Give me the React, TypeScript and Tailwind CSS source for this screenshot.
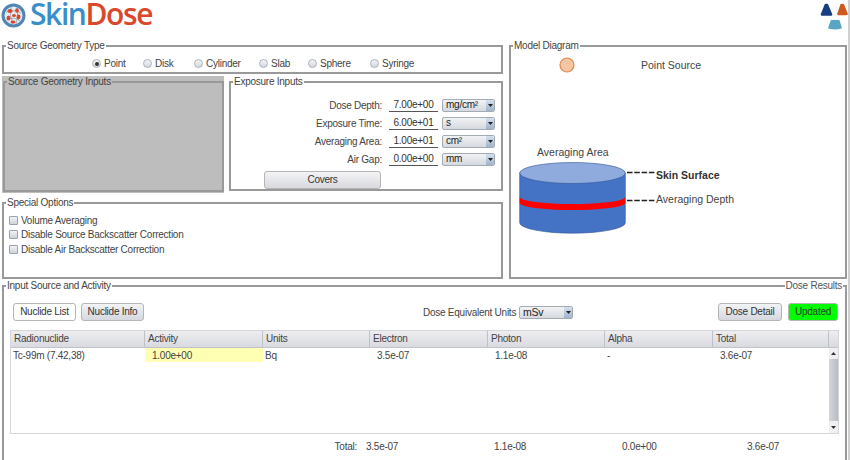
import React from "react";

function Fieldset({ title, className = "", children }: { title: string; className?: string; children?: React.ReactNode }) {
  return (
    <fieldset className={`border-2 border-[#999] min-w-0 ${className}`}>
      <legend className="ml-[2px] px-[1px] leading-[12px] text-[10px] tracking-[-0.25px] text-[#444]">{title}</legend>
      {children}
    </fieldset>
  );
}

function Radio({ label, checked, className = "" }: { label: string; checked?: boolean; className?: string }) {
  return (
    <span className={`flex items-center gap-[3px] ${className}`}>
      <span className="w-[9px] h-[9px] rounded-full border border-[#adb3bb] bg-gradient-to-b from-[#f4f5f7] to-[#d3d7de] flex items-center justify-center">
        {checked && <span className="w-[4px] h-[4px] rounded-full bg-[#333]" />}
      </span>
      <span>{label}</span>
    </span>
  );
}

function Check({ label }: { label: string }) {
  return (
    <div className="flex items-center gap-[3px] h-[14.5px]">
      <span className="w-[9px] h-[9px] rounded-[1px] border border-[#9aa3ad] bg-gradient-to-b from-[#f2f3f5] to-[#cfd3da]" />
      <span>{label}</span>
    </div>
  );
}

function Select({ value, className = "" }: { value: string; className?: string }) {
  return (
    <span className={`h-[13px] flex items-center justify-between rounded-[2px] border border-[#a3abb5] bg-gradient-to-b from-[#f2f3f5] to-[#d5d8de] text-[#222] ${className}`}>
      <span className="pl-[3px] leading-none">{value}</span>
      <span className="w-[8px] h-full rounded-r-[2px] bg-gradient-to-b from-[#d5e0ee] to-[#9fb3cb] flex items-center justify-center">
        <svg width="5" height="3" viewBox="0 0 5 3"><path d="M0 0h5L2.5 3z" fill="#222" /></svg>
      </span>
    </span>
  );
}

function Exposure({ label, value, unit }: { label: string; value: string; unit: string }) {
  return (
    <div className="flex items-center h-[18px]">
      <span className="w-[151px] text-right text-[#444]">{label}</span>
      <span className="w-[49px] ml-[7px] h-[13px] border-b border-[#555] text-center leading-[12px] text-[#333]">{value}</span>
      <Select value={unit} className="ml-[4px] w-[53px]" />
    </div>
  );
}

function Btn({ children, className = "" }: { children: React.ReactNode; className?: string }) {
  return (
    <button className={`h-[18px] rounded-[3px] border border-[#b5b5b5] text-[#333] leading-none flex items-center justify-center whitespace-nowrap ${className}`}>
      {children}
    </button>
  );
}

const columns: [string, string][] = [
  ["Radionuclide", "w-[134px]"],
  ["Activity", "w-[118px]"],
  ["Units", "w-[107px]"],
  ["Electron", "w-[118px]"],
  ["Photon", "w-[117px]"],
  ["Alpha", "w-[108px]"],
  ["Total", "w-[116px]"],
];

function Logo() {
  return (
    <div className="flex items-start h-[28px] pl-[1px]">
      <svg width="25" height="25" viewBox="0 0 25 25" className="mt-[3px]">
        <circle cx="12.5" cy="12.5" r="10.5" fill="#e6ebf0" stroke="#4f86b3" strokeWidth="3" />
        <path d="M5 9 Q12 6 20 10 M6 17 Q13 13 19 18 M10 4 Q8 13 12 21 M16 4 Q18 12 15 21" fill="none" stroke="#8aa0b8" strokeWidth="0.8" />
        <ellipse cx="9" cy="8" rx="2.6" ry="2" fill="#d9482b" />
        <ellipse cx="16" cy="7.5" rx="1.8" ry="2.2" fill="#d9482b" />
        <ellipse cx="7.5" cy="15" rx="2" ry="2.5" fill="#d9482b" />
        <ellipse cx="13" cy="12.5" rx="2" ry="1.6" fill="#d9482b" />
        <ellipse cx="17.5" cy="14" rx="2" ry="2.4" fill="#d9482b" />
        <ellipse cx="12" cy="19" rx="2.6" ry="1.6" fill="#d9482b" />
      </svg>
      <span className="ml-[4px] text-[30px] leading-[28px] tracking-[-1.4px] font-semibold font-['Open_Sans',sans-serif]">
        <span className="text-[#3a8fcb]">Skin</span>
        <span className="text-[#d9482b]">Dose</span>
      </span>
    </div>
  );
}

function CornerLogo() {
  return (
    <svg width="28" height="32" viewBox="0 0 28 32" className="block">
      <polygon points="5.8,5 7,5 11,14.5 2,14.5" fill="#173f80" stroke="#173f80" strokeWidth="2.6" strokeLinejoin="round" />
      <polygon points="21.5,5 23,5 26.6,14 18.4,14" fill="#cc5a1f" stroke="#cc5a1f" strokeWidth="2.4" strokeLinejoin="round" />
      <path d="M10.5 21 Q10.5 20 11.5 20 H18.5 Q19.5 20 19.8 21 L21.8 27.5 Q22 28.5 21 28.8 Q15 30.2 9 28.8 Q8 28.5 8.2 27.5 Z" fill="#5ba5c4" />
    </svg>
  );
}

export default function App() {
  return (
    <div className="w-[850px] h-[460px] overflow-hidden bg-white relative font-['Liberation_Sans',Arial,sans-serif] text-[10px] tracking-[-0.25px] text-[#333] border-r-2 border-[#d0d0d0]">
      <div className="flex justify-between h-[40px]">
        <Logo />
        <CornerLogo />
      </div>

      <div className="flex pl-[2px] gap-[6px]">
        <div className="w-[501px] flex flex-col">
          <Fieldset title="Source Geometry Type" className="h-[34px]">
            <div className="flex items-center pl-[88px] pt-[4px] h-[19px] text-[#444]">
              <Radio label="Point" checked className="w-[51px]" />
              <Radio label="Disk" className="w-[51px]" />
              <Radio label="Cylinder" className="w-[65px]" />
              <Radio label="Slab" className="w-[49px]" />
              <Radio label="Sphere" className="w-[62px]" />
              <Radio label="Syringe" />
            </div>
          </Fieldset>

          <div className="flex mt-[2px] h-[117px]">
            <div className="w-[222px] h-[117px] bg-[#bdbdbd] pl-[1px]">
              <Fieldset title="Source Geometry Inputs" className="h-[116px] border-[#777]" />
            </div>
            <Fieldset title="Exposure Inputs" className="ml-[5px] w-[274px] h-[115px]">
              <div className="pt-[8px]">
                <Exposure label="Dose Depth:" value="7.00e+00" unit="mg/cm²" />
                <Exposure label="Exposure Time:" value="6.00e+01" unit="s" />
                <Exposure label="Averaging Area:" value="1.00e+01" unit="cm²" />
                <Exposure label="Air Gap:" value="0.00e+00" unit="mm" />
                <Btn className="ml-[33px] w-[117px] h-[15px] bg-gradient-to-b from-[#f4f4f6] to-[#d8d9de] mt-[3px]">Covers</Btn>
              </div>
            </Fieldset>
          </div>

          <Fieldset title="Special Options" className="h-[82px] mt-[4px] text-[#444]">
            <div className="pl-[5px] pt-[4px]">
              <Check label="Volume Averaging" />
              <Check label="Disable Source Backscatter Correction" />
              <Check label="Disable Air Backscatter Correction" />
            </div>
          </Fieldset>
        </div>

        <Fieldset title="Model Diagram" className="w-[338px] h-[239px] relative text-[#444] text-[10.5px] tracking-normal">
          <svg width="334" height="224" viewBox="0 0 334 224" className="block">
            <circle cx="56" cy="13" r="7" fill="#f6c5a2" stroke="#d98a50" strokeWidth="1.2" />
            <path d="M8.7 121 V170.7 A52.8 10.5 0 0 0 114.3 170.7 V121 Z" fill="#4472c4" stroke="#2f5597" strokeWidth="0.6" />
            <path d="M8.7 145 A52.8 7 0 0 0 114.3 145 V151 A52.8 7 0 0 1 8.7 151 Z" fill="#ff0000" />
            <ellipse cx="61.5" cy="121" rx="52.8" ry="10.5" fill="#8faadc" stroke="#2f5597" strokeWidth="0.6" />
            <path d="M116 120.5 H144" stroke="#222" strokeWidth="1.5" strokeDasharray="5.5 1.8" />
            <path d="M116 148.5 H144" stroke="#222" strokeWidth="1.5" strokeDasharray="5.5 1.8" />
          </svg>
          <span className="absolute left-[130px] top-[7px] leading-[12px]">Point Source</span>
          <span className="absolute left-[26px] top-[94px] leading-[12px]">Averaging Area</span>
          <span className="absolute left-[145px] top-[117px] leading-[12px] font-bold text-[#333]">Skin Surface</span>
          <span className="absolute left-[145px] top-[141px] leading-[12px]">Averaging Depth</span>
        </Fieldset>
      </div>

      <div className="pl-[2px] pr-[1px] mt-[1px]">
        <Fieldset title="Input Source and Activity" className="h-[190px] relative">
          <span className="absolute right-[2px] top-[-12px] bg-white px-[1px] leading-[12px] text-[#555]">Dose Results</span>
          <div className="flex items-center pl-[9px] pr-[7px] pt-[6px] h-[34px]">
            <Btn className="w-[63px] bg-white">Nuclide List</Btn>
            <Btn className="w-[63px] ml-[5px] bg-gradient-to-b from-[#f2f3f5] to-[#d5d8de]">Nuclide Info</Btn>
            <span className="ml-[279px] w-[90px] whitespace-nowrap text-[#444]">Dose Equivalent Units</span>
            <Select value="mSv" className="ml-[6px] w-[54px] text-[10.5px]" />
            <Btn className="ml-auto w-[64px] bg-gradient-to-b from-[#f2f3f5] to-[#d5d8de]">Dose Detail</Btn>
            <Btn className="ml-[6px] w-[50px] bg-[#00ff00] border-[#3ccf3c] text-[#155c15]">Updated</Btn>
          </div>

          <div className="mx-[6px] mt-[4px] h-[104px] border border-[#d4d6dc] flex flex-col">
            <div className="flex h-[17px] bg-gradient-to-b from-[#eeeef1] to-[#d9dae0] border-b border-[#c2c4cc] shrink-0">
              {columns.map(([name, w]) => (
                <span key={name} className={`${w} border-r border-[#bfc1c9] pl-[3px] leading-[15px] text-[#444]`}>{name}</span>
              ))}
              <span className="flex-1" />
            </div>
            <div className="flex flex-1 min-h-0">
              <div className="flex h-[14px] leading-[15px] w-[818px] text-[#444]">
                <span className="w-[134px] pl-[2px]">Tc-99m (7.42,38)</span>
                <span className="w-[118px] pl-[7px] bg-[#ffffb3]">1.00e+00</span>
                <span className="w-[107px] pl-[2px]">Bq</span>
                <span className="w-[118px] pl-[7px]">3.5e-07</span>
                <span className="w-[117px] pl-[7px]">1.1e-08</span>
                <span className="w-[108px] pl-[2px]">-</span>
                <span className="w-[116px] pl-[7px]">3.6e-07</span>
              </div>
              <div className="flex-1 flex flex-col bg-[#f0f0f2]">
                <span className="h-[11px] flex items-center justify-center"><svg width="5" height="3" viewBox="0 0 5 3"><path d="M2.5 0L5 3H0z" fill="#333" /></svg></span>
                <span className="flex-1 bg-gradient-to-r from-[#d5d6dc] to-[#b9bbc3]" />
                <span className="h-[12px] flex items-center justify-center"><svg width="5" height="3" viewBox="0 0 5 3"><path d="M0 0h5L2.5 3z" fill="#333" /></svg></span>
              </div>
            </div>
          </div>

          <div className="flex mt-[6px] leading-[13px] text-[#444]">
            <span className="w-[353px] text-right">Total:</span>
            <span className="w-[137px] pl-[9px]">3.5e-07</span>
            <span className="w-[128px]">1.1e-08</span>
            <span className="w-[125px]">0.0e+00</span>
            <span>3.6e-07</span>
          </div>
        </Fieldset>
      </div>
    </div>
  );
}
